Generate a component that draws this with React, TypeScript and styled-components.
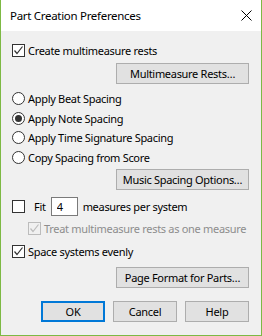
import React, {useState} from 'react';
import styled, {createGlobalStyle} from 'styled-components';

function App() {
  const [createRests, setCreateRests] = useState(true)
  const [spacing, setSpacing] = useState('note')
  const [fit, setFit] = useState(false)
  const [evenly, setEvenly] = useState(true)

  const radios = [
    {id: 'beat', label: 'Apply Beat Spacing'},
    {id: 'note', label: 'Apply Note Spacing'},
    {id: 'time', label: 'Apply Time Signature Spacing'},
    {id: 'copy', label: 'Copy Spacing from Score'},
  ]

  return (
    <Window>
      <GlobalStyle />
      <TitleBar>
        <Title>Part Creation Preferences</Title>
        <CloseBtn aria-label="Close">
          <svg width="11" height="11" viewBox="0 0 11 11">
            <path d="M0.5 0.5 L10.5 10.5 M10.5 0.5 L0.5 10.5" stroke="#000" strokeWidth="1" fill="none" />
          </svg>
        </CloseBtn>
      </TitleBar>
      <Body>
        <CheckRow onClick={() => setCreateRests(!createRests)}>
          <CheckBox checked={createRests} />
          <Label>Create multimeasure rests</Label>
        </CheckRow>
        <SideButton $top={3}>Multimeasure Rests…</SideButton>

        <RadioGroup>
          {radios.map(r => (
            <RadioRow key={r.id} onClick={() => setSpacing(r.id)}>
              <Radio $on={spacing === r.id} />
              <Label>{r.label}</Label>
            </RadioRow>
          ))}
        </RadioGroup>
        <SideButton $top={2}>Music Spacing Options…</SideButton>

        <FitRow>
          <span onClick={() => setFit(!fit)}><CheckBox checked={fit} /></span>
          <FitLabel>Fit</FitLabel>
          <NumberBox defaultValue="4" />
          <Label>measures per system</Label>
        </FitRow>
        <SubRow>
          <CheckBox checked disabled />
          <Label $disabled>Treat multimeasure rests as one measure</Label>
        </SubRow>
        <CheckRow $top={3} onClick={() => setEvenly(!evenly)}>
          <CheckBox checked={evenly} />
          <Label>Space systems evenly</Label>
        </CheckRow>
        <SideButton $top={6}>Page Format for Parts…</SideButton>

        <Footer>
          <DlgButton $default>OK</DlgButton>
          <DlgButton>Cancel</DlgButton>
          <DlgButton>Help</DlgButton>
        </Footer>
      </Body>
    </Window>
  );
}

function CheckBox({checked, disabled}: {checked: boolean, disabled?: boolean}) {
  const c = disabled ? '#bcbcbc' : '#333'
  return (
    <Box $disabled={disabled}>
      {checked && <svg width="11" height="11" viewBox="0 0 11 11">
        <path d="M1.5 5.5 L4 8.5 L9.5 1.5" stroke={c} strokeWidth="1.2" fill="none" />
      </svg>}
    </Box>
  )
}

const GlobalStyle = createGlobalStyle`
  * {
    box-sizing: border-box;
  }
  body {
    margin: 0;
    font-family: 'Noto Sans', 'Open Sans', sans-serif;
    font-size: 11px;
    letter-spacing: -0.3px;
    color: #000;
    background: #fff;
  }
`

const Window = styled.div`
  width: 262px;
  height: 336px;
  border: 1px solid #7db944;
  border-top: 0;
  background: #f0f0f0;
  display: flex;
  flex-direction: column;
`

const TitleBar = styled.div`
  height: 31px;
  background: #fff;
  display: flex;
  align-items: center;
  justify-content: space-between;
  padding: 0 9px 0 9px;
`

const Title = styled.div`
  font-size: 11.5px;
`

const CloseBtn = styled.div`
  width: 11px;
  height: 11px;
  display: flex;
`

const Body = styled.div`
  flex: 1;
  display: flex;
  flex-direction: column;
  padding: 9px 12px 0 11px;
`

const CheckRow = styled.div<{$top?: number}>`
  height: 20px;
  display: flex;
  align-items: center;
  gap: 3px;
  margin-top: ${p => p.$top || 0}px;
`

const Box = styled.div<{$disabled?: boolean}>`
  width: 13px;
  height: 13px;
  border: 1px solid ${p => p.$disabled ? '#bcbcbc' : '#333'};
  background: ${p => p.$disabled ? '#f0f0f0' : '#fff'};
  display: flex;
  align-items: center;
  justify-content: center;
  flex: none;
`

const Label = styled.span<{$disabled?: boolean}>`
  white-space: nowrap;
  color: ${p => p.$disabled ? '#8d8d8d' : '#000'};
`

const SideButton = styled.div<{$top: number}>`
  align-self: flex-end;
  width: 133px;
  height: 21px;
  margin-top: ${p => p.$top}px;
  background: #e1e1e1;
  border: 1px solid #adadad;
  display: flex;
  align-items: center;
  justify-content: center;
`

const RadioGroup = styled.div`
  display: flex;
  flex-direction: column;
  margin-top: 5px;
`

const RadioRow = styled.div`
  height: 19.5px;
  display: flex;
  align-items: center;
  gap: 3px;
`

const Radio = styled.div<{$on: boolean}>`
  width: 13px;
  height: 13px;
  border-radius: 50%;
  border: 1px solid #333;
  background: #fff;
  flex: none;
  display: flex;
  align-items: center;
  justify-content: center;
  &::after {
    content: '';
    width: 7px;
    height: 7px;
    border-radius: 50%;
    background: ${p => p.$on ? '#333' : 'transparent'};
  }
`

const FitRow = styled.div`
  height: 19px;
  margin-top: 7px;
  display: flex;
  align-items: center;
`

const FitLabel = styled.span`
  margin-left: 9px;
  margin-right: 5px;
`

const NumberBox = styled.input`
  width: 27px;
  height: 19px;
  border: 1px solid #7a7a7a;
  background: #fff;
  font: inherit;
  padding: 0 0 0 5px;
  margin-right: 5px;
  outline: none;
`

const SubRow = styled.div`
  height: 20px;
  margin-top: 2px;
  padding-left: 16px;
  display: flex;
  align-items: center;
  gap: 3px;
`

const Footer = styled.div`
  display: flex;
  justify-content: flex-end;
  gap: 8px;
  margin-top: 13px;
`

const DlgButton = styled.div<{$default?: boolean}>`
  width: 64px;
  height: 21px;
  background: #e1e1e1;
  border: ${p => p.$default ? '2px solid #0078d7' : '1px solid #adadad'};
  display: flex;
  align-items: center;
  justify-content: center;
`

export default App;
